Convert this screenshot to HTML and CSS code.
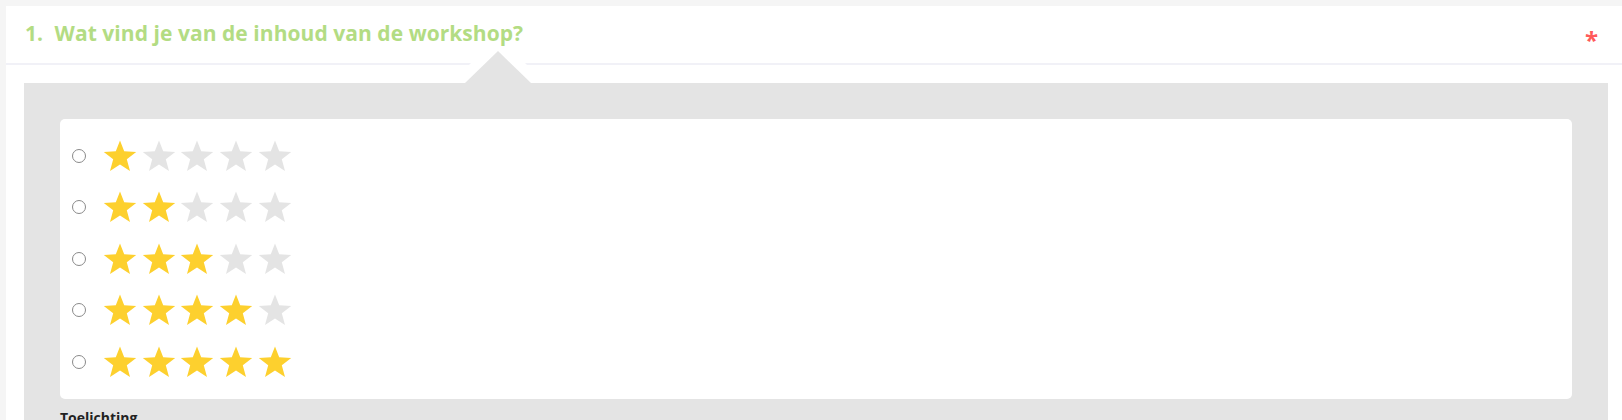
FILE: index.html
```html
<!DOCTYPE html>
<html>
  <head>
    <title>Workshop evaluatie</title>
    <link rel="stylesheet" href="styles.css">
  </head>
  <body>
    <div class="question">
      <div class="question-head">
        <h2 class="question-title"><span class="question-nr">1.</span> Wat vind je van de inhoud van de workshop?</h2>
        <span class="required">*</span>
      </div>
      <div class="question-body">
        <div class="choices">
          <label class="choice"><input type="radio" name="q1" value="1"><span class="stars" data-score="1"></span></label>
          <label class="choice"><input type="radio" name="q1" value="2"><span class="stars" data-score="2"></span></label>
          <label class="choice"><input type="radio" name="q1" value="3"><span class="stars" data-score="3"></span></label>
          <label class="choice"><input type="radio" name="q1" value="4"><span class="stars" data-score="4"></span></label>
          <label class="choice"><input type="radio" name="q1" value="5"><span class="stars" data-score="5"></span></label>
        </div>
        <p class="remark-label">Toelichting</p>
      </div>
    </div>

    <script>
      // five stars per row, the first "score" ones are filled
      var STAR = "M17,0.5 L21.2,11.3 L33.2,11.9 L23.8,19.3 L27,31 L17,24.4 L7,31 L10.2,19.3 L0.8,11.9 L12.8,11.3 Z";
      var rows = document.querySelectorAll(".stars");
      for (var i = 0; i < rows.length; i++) {
        var score = parseInt(rows[i].getAttribute("data-score"));
        var html = "";
        for (var s = 1; s <= 5; s++) {
          var cls = s <= score ? "star on" : "star";
          html += '<svg class="' + cls + '" viewBox="0 0 34 32" width="34" height="32"><path d="' + STAR + '"/></svg>';
        }
        rows[i].innerHTML = html;
      }
    </script>
  </body>
</html>
```

FILE: styles.css
```css
html, body{
  height: 100%;
}

body{
  margin: 0;
  padding: 6px 0 0 6px;
  background-color: #f5f5f5;
  font-family: "Open Sans", "Liberation Sans", sans-serif;
  overflow: hidden;
}

.question{
  background-color: #fff;
  min-height: 100%;
}

.question-head{
  display: flex;
  align-items: flex-start;
  justify-content: space-between;
  padding: 13px 18px 15px 19px;
  border-bottom: 2px solid #f1f1f7;
}

.question-title{
  position: relative;
  z-index: 1;
  margin: 0;
  font-size: 21px;
  line-height: 29px;
  font-weight: 700;
  color: #b3dc83;
  letter-spacing: 0.05px;
}

.question-nr{
  margin-right: 6px;
}

.required{
  color: #ff5a5a;
  font-weight: 700;
  font-size: 24px;
  line-height: 29px;
  margin: 6px 6px -6px 0;
}

.question-body{
  position: relative;
  background-color: #e4e4e4;
  margin: 18px 14px 0 18px;
  padding: 36px 36px 10px 36px;
}

/* arrow pointing up at the question, white edge hides the divider */
.question-body::before,
.question-body::after{
  content: "";
  position: absolute;
  width: 0;
  height: 0;
  border-style: solid;
  border-color: transparent;
}

.question-body::before{
  top: -47px;
  left: 427px;
  border-width: 0 47px 47px 47px;
  border-bottom-color: #fff;
}

.question-body::after{
  top: -32px;
  left: 441px;
  border-width: 0 33px 32px 33px;
  border-bottom-color: #e4e4e4;
}

.choices{
  background-color: #fff;
  border-radius: 5px;
  padding: 11px 0 11.5px 12px;
}

.choice{
  display: flex;
  align-items: center;
  height: 51.5px;
  cursor: pointer;
}

.choice input{
  appearance: none;
  -webkit-appearance: none;
  box-sizing: border-box;
  width: 14px;
  height: 14px;
  margin: 0 17px 0 0;
  border: 1.5px solid #8a8a8a;
  border-radius: 50%;
  background-color: #fff;
}

.choice input:checked{
  background-color: #8a8a8a;
  box-shadow: inset 0 0 0 2px #fff;
}

.stars{
  display: flex;
  gap: 4.7px;
}

.star{
  display: block;
  fill: #e4e4e4;
}

.star.on{
  fill: #fdd02e;
}

.remark-label{
  margin: 9px 0 0 0;
  font-size: 14px;
  line-height: 20px;
  font-weight: 700;
  color: #222;
}
```
